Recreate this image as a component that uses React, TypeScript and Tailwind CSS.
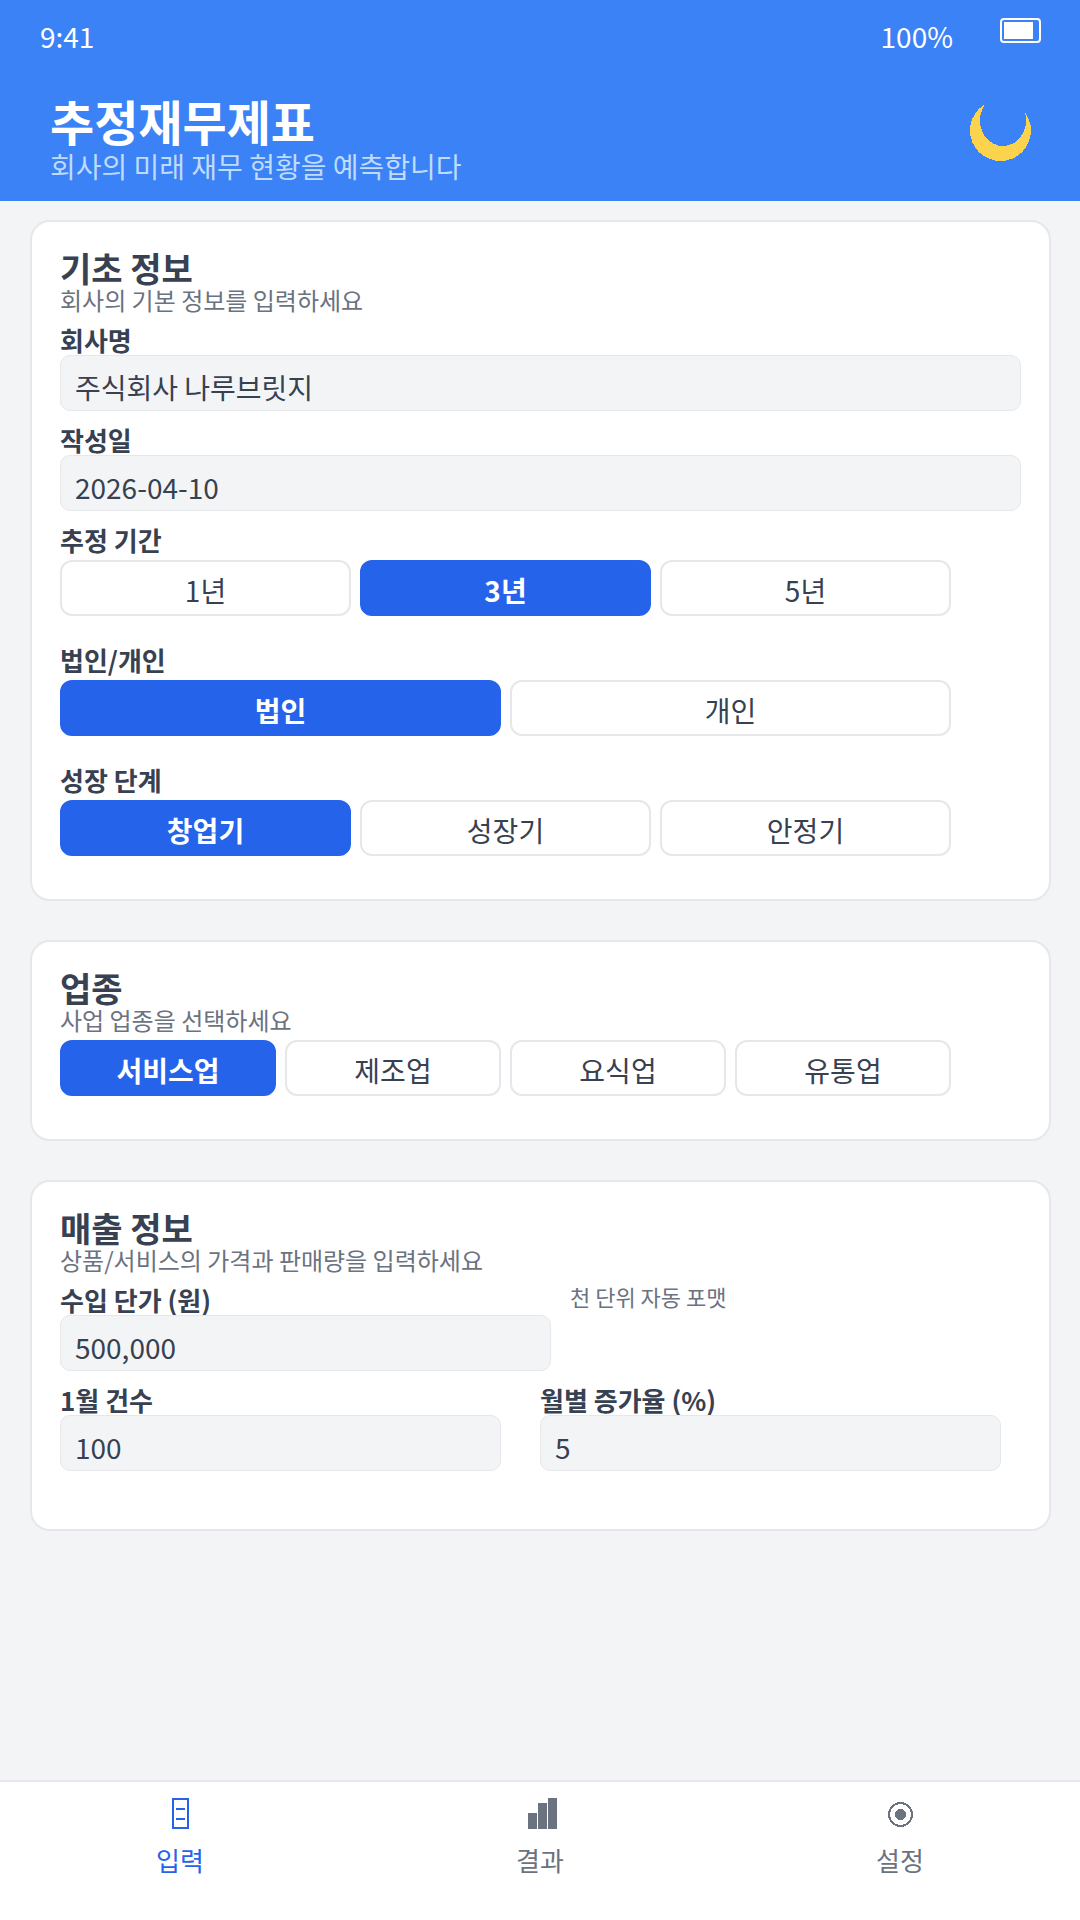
import React, { useState } from 'react';

interface CardProps {
  title: string;
  description: string;
  className: string;
  children: React.ReactNode;
}

const Card: React.FC<CardProps> = ({ title, description, className, children }) => (
  <section className={`w-[1021px] rounded-[20px] border-2 border-[#e5e7eb] bg-white px-7 pt-[21px] ${className}`}>
    <h2 className="h-10 text-[34px] font-bold leading-[49px]">{title}</h2>
    <p className="h-[37px] text-2xl leading-[33px] text-[#6b7280]">{description}</p>
    {children}
  </section>
);

interface FieldProps {
  label: string;
  value: string;
  className: string;
}

const Field: React.FC<FieldProps> = ({ label, value, className }) => (
  <div className={className}>
    <div className="h-[35px] whitespace-nowrap text-[26px] font-bold leading-10">{label}</div>
    <div className="relative h-14 rounded-[10px] border border-[#e5e7eb] bg-[#f3f4f6] px-3.5 pt-[11px] text-[28px] leading-[41px]">
      {value}
    </div>
  </div>
);

interface OptionsProps {
  label?: string;
  options: string[];
  initial: string;
  columns: string;
}

const Options: React.FC<OptionsProps> = ({ label, options, initial, columns }) => {
  const [selected, setSelected] = useState(initial);

  return (
    <div>
      {label && <div className="h-10 text-[26px] font-bold leading-10">{label}</div>}
      <div className={`grid w-[891px] gap-[9px] ${columns}`}>
        {options.map((option) => (
          <button
            key={option}
            onClick={() => setSelected(option)}
            className={`h-14 rounded-xl border-2 pt-1 text-[28px] leading-[41px] ${
              selected === option
                ? 'border-[#2563eb] bg-[#2563eb] font-bold text-white'
                : 'border-[#e5e7eb] bg-white'
            }`}
          >
            {option}
          </button>
        ))}
      </div>
    </div>
  );
};

const InputIcon = () => (
  <svg width="40" height="32" shapeRendering="crispEdges">
    <rect x="13" y="1" width="15" height="29" fill="none" stroke="currentColor" strokeWidth="2" />
    <rect x="16" y="10" width="9" height="2" fill="currentColor" />
    <rect x="16" y="20" width="9" height="2" fill="currentColor" />
  </svg>
);

const ResultIcon = () => (
  <svg width="40" height="32" fill="currentColor" shapeRendering="crispEdges">
    <rect x="8" y="15" width="9" height="16" />
    <rect x="18" y="5" width="9" height="26" />
    <rect x="28" y="0" width="9" height="31" />
  </svg>
);

const SettingsIcon = () => (
  <svg width="40" height="32" shapeRendering="crispEdges">
    <circle cx="20.5" cy="16.5" r="11.5" fill="none" stroke="currentColor" strokeWidth="2" />
    <circle cx="20.5" cy="16.5" r="5.5" fill="currentColor" />
  </svg>
);

const tabs = [
  { name: '입력', icon: <InputIcon />, color: 'text-[#2563eb]' },
  { name: '결과', icon: <ResultIcon />, color: 'text-[#6b7280]' },
  { name: '설정', icon: <SettingsIcon />, color: 'text-[#6b7280]' },
];

const App: React.FC = () => {
  return (
    <div className="flex h-[1920px] w-[1080px] flex-col overflow-hidden bg-[#f3f4f6] font-['Noto_Sans_CJK_KR',sans-serif] text-[#374151]">
      <header className="h-[201px] shrink-0 bg-[#3b82f6] text-white">
        <div className="flex h-[85px] items-start pl-10 pr-[39px] text-[28px] leading-[41px]">
          <span className="pt-4">9:41</span>
          <span className="ml-auto mr-[47px] pt-4">100%</span>
          <div className="mt-[18px] h-[25px] w-[41px] rounded-[4px] border-2 border-white p-0.5">
            <div className="h-[17px] w-[29px] bg-white" />
          </div>
        </div>
        <div className="flex items-start justify-between pl-[50px] pr-[49px]">
          <div>
            <h1 className="h-[61px] text-5xl font-bold leading-[70px]">추정재무제표</h1>
            <p className="text-[28px] leading-[41px] text-[#bfdbfe]">회사의 미래 재무 현황을 예측합니다</p>
          </div>
          {/* 다크 모드 전환 */}
          <svg className="mt-[15px]" width="61" height="61" shapeRendering="crispEdges">
            <circle cx="30.5" cy="30.5" r="30.5" fill="#fcd34d" />
            <ellipse cx="33" cy="20.5" rx="23" ry="25.5" fill="#3b82f6" />
          </svg>
        </div>
      </header>

      <main className="flex flex-1 flex-col gap-[39px] pl-[30px] pt-[19px]">
        <Card title="기초 정보" description="회사의 기본 정보를 입력하세요" className="h-[681px]">
          <Field label="회사명" value="주식회사 나루브릿지" className="mb-[9px] w-[961px]" />
          <Field label="작성일" value="2026-04-10" className="mb-[9px] w-[961px]" />
          <div className="flex flex-col gap-6">
            <Options label="추정 기간" options={['1년', '3년', '5년']} initial="3년" columns="grid-cols-3" />
            <Options label="법인/개인" options={['법인', '개인']} initial="법인" columns="grid-cols-2" />
            <Options label="성장 단계" options={['창업기', '성장기', '안정기']} initial="창업기" columns="grid-cols-3" />
          </div>
        </Card>

        <Card title="업종" description="사업 업종을 선택하세요" className="h-[201px]">
          <Options options={['서비스업', '제조업', '요식업', '유통업']} initial="서비스업" columns="grid-cols-4" />
        </Card>

        <Card title="매출 정보" description="상품/서비스의 가격과 판매량을 입력하세요" className="h-[351px]">
          <div className="mb-[9px] flex">
            <Field label="수입 단가 (원)" value="500,000" className="w-[491px]" />
            <span className="ml-[19px] text-[22px] leading-8 text-[#6b7280]">천 단위 자동 포맷</span>
          </div>
          <div className="flex gap-[39px]">
            <Field label="1월 건수" value="100" className="w-[441px]" />
            <Field label="월별 증가율 (%)" value="5" className="w-[461px]" />
          </div>
        </Card>
      </main>

      <nav className="grid h-[140px] shrink-0 grid-cols-3 border-t-2 border-[#e5e7eb] bg-white pt-4">
        {tabs.map((tab) => (
          <button key={tab.name} className={`flex flex-col items-center ${tab.color}`}>
            {tab.icon}
            <span className="mt-[11px] text-[26px] leading-[38px]">{tab.name}</span>
          </button>
        ))}
      </nav>
    </div>
  );
};

export default App;
